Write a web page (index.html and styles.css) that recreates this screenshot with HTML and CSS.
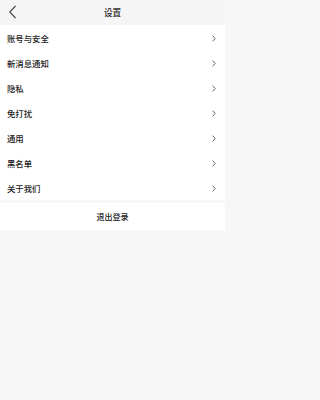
FILE: index.html
```html
<!DOCTYPE html>
<html lang="zh">
<head>
<meta charset="utf-8">
<link rel="stylesheet" href="styles.css">
</head>
<body>
<div class="page">
  <header class="nav">
    <span class="back">
      <svg width="9" height="14" viewBox="0 0 9 14"><path d="M7.5 1 L1.8 7 L7.5 13" fill="none" stroke="#444" stroke-width="1.1"/></svg>
    </span>
    <span class="title">设置</span>
  </header>
  <ul class="list">
    <li class="row"><span>账号与安全</span><span class="arrow"><svg width="4" height="7" viewBox="0 0 4 7"><path d="M0.6 0.6 L3.2 3.5 L0.6 6.4" fill="none" stroke="#555" stroke-width="0.9"/></svg></span></li>
    <li class="row"><span>新消息通知</span><span class="arrow"><svg width="4" height="7" viewBox="0 0 4 7"><path d="M0.6 0.6 L3.2 3.5 L0.6 6.4" fill="none" stroke="#555" stroke-width="0.9"/></svg></span></li>
    <li class="row"><span>隐私</span><span class="arrow"><svg width="4" height="7" viewBox="0 0 4 7"><path d="M0.6 0.6 L3.2 3.5 L0.6 6.4" fill="none" stroke="#555" stroke-width="0.9"/></svg></span></li>
    <li class="row"><span>免打扰</span><span class="arrow"><svg width="4" height="7" viewBox="0 0 4 7"><path d="M0.6 0.6 L3.2 3.5 L0.6 6.4" fill="none" stroke="#555" stroke-width="0.9"/></svg></span></li>
    <li class="row"><span>通用</span><span class="arrow"><svg width="4" height="7" viewBox="0 0 4 7"><path d="M0.6 0.6 L3.2 3.5 L0.6 6.4" fill="none" stroke="#555" stroke-width="0.9"/></svg></span></li>
    <li class="row"><span>黑名单</span><span class="arrow"><svg width="4" height="7" viewBox="0 0 4 7"><path d="M0.6 0.6 L3.2 3.5 L0.6 6.4" fill="none" stroke="#555" stroke-width="0.9"/></svg></span></li>
    <li class="row"><span>关于我们</span><span class="arrow"><svg width="4" height="7" viewBox="0 0 4 7"><path d="M0.6 0.6 L3.2 3.5 L0.6 6.4" fill="none" stroke="#555" stroke-width="0.9"/></svg></span></li>
  </ul>
  <div class="logout">退出登录</div>
</div>
</body>
</html>
```
FILE: styles.css
```css
html, body {
  margin: 0;
  padding: 0;
  background: #f7f7f7;
}
body {
  font-family: "Noto Sans CJK SC", "Noto Sans", sans-serif;
  color: #222;
  font-size: 8.4px;
  font-weight: 500;
}
.page {
  width: 225px;
  min-height: 400px;
  display: flex;
  flex-direction: column;
}
.nav {
  height: 25px;
  background: #f5f5f5;
  display: flex;
  align-items: center;
  justify-content: center;
  position: relative;
}
.back {
  position: absolute;
  left: 8px;
  top: 5px;
  display: flex;
}
.title {
  font-size: 8.6px;
  color: #1a1a1a;
  padding-bottom: 1px;
}
.list {
  list-style: none;
  margin: 0;
  padding: 0;
  background: #fff;
}
.row {
  height: 25px;
  display: flex;
  align-items: center;
  justify-content: space-between;
  padding: 1px 9px 0 7px;
  box-sizing: border-box;
}
.arrow {
  display: flex;
}
.logout {
  margin-top: 3px;
  height: 27px;
  background: #fff;
  display: flex;
  align-items: center;
  justify-content: center;
  font-size: 8px;
}
```
